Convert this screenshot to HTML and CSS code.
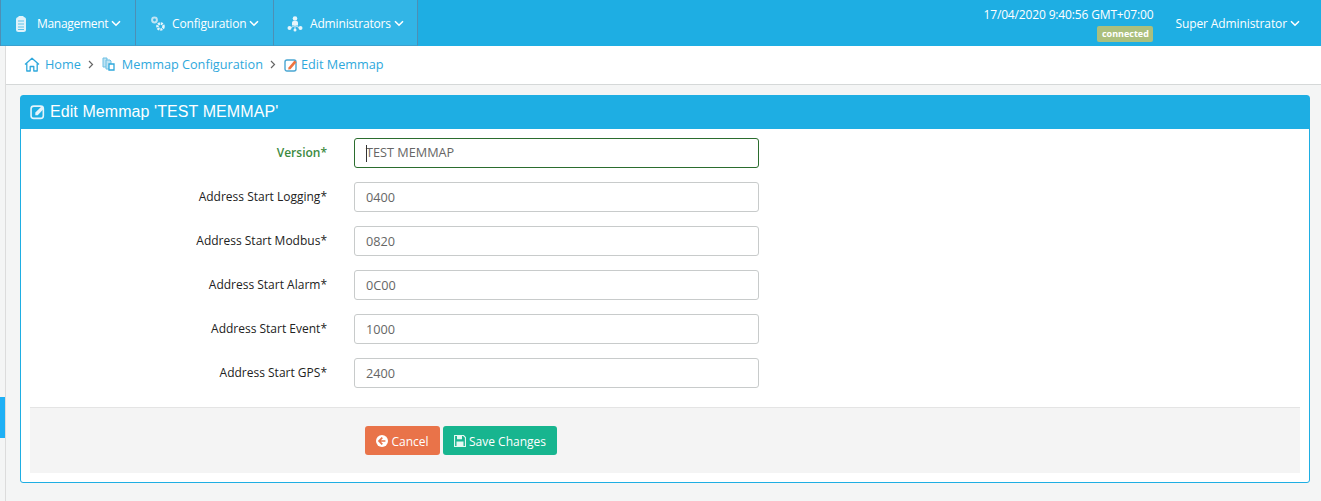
FILE: index.html
```html
<!DOCTYPE html>
<html lang="en">
<head>
<meta charset="utf-8">
<title>Edit Memmap</title>
<link rel="stylesheet" href="styles.css">
</head>
<body>
<header class="topbar">
  <nav class="menu">
    <a class="menu-item item-1"><svg class="mi" width="12" height="18" viewBox="0 0 12 18"><rect x="1" y="2" width="10" height="15" rx="2.500" fill="#dff2fa"/><rect x="3.500" y="1" width="5" height="2" fill="#dff2fa"/><path d="M3 6h6M3 9h6M3 12h6M3 14.500h6" stroke="#5cc3ea" stroke-width="1"/></svg><span>Management</span><svg class="chev" width="10" height="7" viewBox="0 0 10 7"><path d="M1 1.200 5 5.200 9 1.200" fill="none" stroke="#fff" stroke-width="1.600"/></svg></a>
    <a class="menu-item item-2"><svg class="mi" width="16" height="18" viewBox="0 0 16 18"><circle cx="4.500" cy="5" r="2.400" fill="none" stroke="#bfe3f3" stroke-width="2"/><circle cx="10.500" cy="11.500" r="3" fill="none" stroke="#e6f5fb" stroke-width="2.600" stroke-dasharray="2 .8"/></svg><span>Configuration</span><svg class="chev" width="10" height="7" viewBox="0 0 10 7"><path d="M1 1.200 5 5.200 9 1.200" fill="none" stroke="#fff" stroke-width="1.600"/></svg></a>
    <a class="menu-item item-3"><svg class="mi" width="16" height="18" viewBox="0 0 16 18"><circle cx="8" cy="3.500" r="2.300" fill="#e6f5fb"/><path d="M5 10.500V7.500Q5 6 6.500 6h3Q11 6 11 7.500v3Z" fill="#e6f5fb"/><path d="M8 10v4M3 13l5-2.500 5 2.500" fill="none" stroke="#cfe9f5"/><circle cx="2.500" cy="13" r="2" fill="#e6f5fb"/><circle cx="13.500" cy="13" r="2" fill="#e6f5fb"/><circle cx="8" cy="15" r="1.500" fill="#e6f5fb"/></svg><span>Administrators</span><svg class="chev" width="10" height="7" viewBox="0 0 10 7"><path d="M1 1.200 5 5.200 9 1.200" fill="none" stroke="#fff" stroke-width="1.600"/></svg></a>
  </nav>
  <div class="status">
    <div class="clock">17/04/2020 9:40:56 GMT+07:00</div>
    <span class="badge">connected</span>
  </div>
  <a class="user"><span>Super Administrator</span><svg class="chev" width="10" height="7" viewBox="0 0 10 7"><path d="M1 1.200 5 5.200 9 1.200" fill="none" stroke="#fff" stroke-width="1.600"/></svg></a>
</header>
<div class="side-tab"></div>
<main class="content">
  <div class="crumbs">
    <svg class="ci" width="16" height="15" viewBox="0 0 16 15"><path d="M1 7.500 8 1.200l7 6.300M2.800 6.500V14h3.400V9.500h3.600V14h3.400V6.500" fill="none" stroke="#2ea8dc" stroke-width="1.300" stroke-linejoin="round"/></svg>
    <a>Home</a>
    <svg class="sep" width="6" height="9" viewBox="0 0 6 9"><path d="M1 1l3.500 3.500L1 8" fill="none" stroke="#666" stroke-width="1.200"/></svg>
    <svg class="ci ci-copy" width="13" height="14" viewBox="0 0 13 14"><path d="M1 1h4v9H1z" fill="#bfe3f3" stroke="#6cc0e4"/><path d="M4 3h4l1 1v8H4z" fill="#bfe3f3" stroke="#6cc0e4"/><path d="M7 7h5v6H7z" fill="#fff" stroke="#2ea8dc" stroke-width="1.300"/></svg>
    <a>Memmap Configuration</a>
    <svg class="sep" width="6" height="9" viewBox="0 0 6 9"><path d="M1 1l3.500 3.500L1 8" fill="none" stroke="#666" stroke-width="1.200"/></svg>
    <svg class="ci ci-edit" width="14" height="14" viewBox="0 0 14 14"><rect x="1" y="2" width="11" height="11" rx="2" fill="none" stroke="#4aa6d2" stroke-width="1.400"/><path d="M4.500 9.500 10.500 2.500l2 1.700-6 7-2.300.4Z" fill="#ee7440"/></svg>
    <a>Edit Memmap</a>
  </div>
  <section class="panel">
    <h2 class="panel-head"><svg class="hi" width="16" height="16" viewBox="0 0 15 15"><rect x="1" y="2" width="11.500" height="11.500" rx="2.500" fill="none" stroke="#e4f4fb" stroke-width="1.500"/><path d="M5 10.500V8l6-6 2.200 2.200-6 6.300Z" fill="#e4f4fb"/></svg>Edit Memmap 'TEST MEMMAP'</h2>
    <form class="form">
      <div class="rows">
        <div class="row active"><label>Version*</label><div class="field"><i class="caret"></i>TEST MEMMAP</div></div>
        <div class="row"><label>Address Start Logging*</label><div class="field">0400</div></div>
        <div class="row"><label>Address Start Modbus*</label><div class="field">0820</div></div>
        <div class="row"><label>Address Start Alarm*</label><div class="field">0C00</div></div>
        <div class="row"><label>Address Start Event*</label><div class="field">1000</div></div>
        <div class="row"><label>Address Start GPS*</label><div class="field">2400</div></div>
      </div>
      <div class="actions">
        <button type="button" class="btn cancel"><svg width="12" height="12" viewBox="0 0 12 12"><circle cx="6" cy="6" r="6" fill="#fff"/><path d="M6.300 2.600 3 6l3.300 3.400M3.400 6H9.400" fill="none" stroke="#e97349" stroke-width="1.700"/></svg>Cancel</button>
        <button type="button" class="btn save"><svg width="12" height="12" viewBox="0 0 12 12"><path d="M1 .5h8.500L11.500 2.500V11.500H.5V.5Z" fill="none" stroke="#e4f7f1" stroke-width="1.200"/><path d="M3 1h5v3.200H3zM2.500 6.500h7v4.500h-7z" fill="#e4f7f1"/></svg>Save Changes</button>
      </div>
    </form>
  </section>
</main>
</body>
</html>
```
FILE: styles.css
```css
* { box-sizing: border-box; }
html, body { margin: 0; padding: 0; height: 501px; overflow: hidden; }
body { font-family: "Open Sans", sans-serif; background: #f4f5f5; color: #222; position: relative; }
.topbar { height: 46px; background: #1eaee3; display: flex; align-items: stretch; color: #fff; }
.menu { display: flex; background: #32b5e6; border-left: 1px solid #4d8fb5; }
.menu-item { display: flex; align-items: center; font-size: 12px; letter-spacing: -.16px; border-right: 1px solid #4d8fb5; border-bottom: 1px solid #3aa1cf; padding-top: 2px; }
.item-1 { width: 135px; padding-left: 14px; letter-spacing: -.3px; }
.item-2 { width: 138px; padding-left: 14px; }
.item-3 { width: 144px; padding-left: 13px; }
.mi { margin-right: 7px; flex: none; }
.item-1 .mi { margin-right: 10px; }
.item-2 .mi { margin-right: 6px; }
.chev { margin-left: 3px; flex: none; }
.status { margin-left: auto; display: flex; flex-direction: column; align-items: flex-end; padding-top: 7px; }
.clock { font-size: 12px; line-height: 16px; letter-spacing: -.15px; }
.badge { margin-top: 3px; width: 56px; height: 16px; background: #abbf7d; border-radius: 2px; font-size: 9px; font-weight: 700; line-height: 16px; text-align: center; }
.user { display: flex; align-items: center; font-size: 12px; letter-spacing: -.1px; margin-left: 22px; padding-right: 21px; }
.side-tab { position: absolute; left: 0; top: 397px; width: 5px; height: 41px; background: #1fb0f5; }
.content { margin-left: 5px; border-left: 1px solid #dcdcdc; height: 455px; }
.crumbs { height: 39px; background: #fff; border-bottom: 1px solid #d5d8d8; display: flex; align-items: center; padding: 0 0 2px 18px; font-size: 12.7px; color: #2ea8dc; }
.crumbs a { line-height: 17px; }
.ci { margin-right: 5px; flex: none; }
.ci-copy { margin-right: 7px; }
.ci-edit { margin-right: 3px; margin-top: 2px; }
.sep { margin: 0 8px 0 7px; flex: none; }
.panel { margin: 10px 0 0 14px; width: 1290px; height: 388px; background: #fff; border: 1px solid #1eaee3; border-radius: 3px; }
.panel-head { margin: 0; height: 33px; background: #1eaee3; color: #fff; font: 400 16px/32px "Liberation Sans", sans-serif; letter-spacing: .08px; display: flex; align-items: center; padding: 0 0 2px 9px; }
.hi { margin-right: 4px; }
.form { padding: 0 9px; }
.rows { padding-top: 9px; height: 278px; }
.row { display: flex; height: 30px; margin-bottom: 14px; align-items: flex-start; }
.row label { width: 297px; text-align: right; font-size: 12px; line-height: 16px; padding-top: 7px; color: #222; }
.row.active label { color: #3c8a3f; font-weight: 600; }
.field { margin-left: 27px; width: 405px; height: 30px; border: 1px solid #c8cbcb; border-radius: 3px; font-size: 12.7px; line-height: 28px; padding-left: 11px; color: #666; position: relative; }
.row.active .field { border-color: #2b6d2e; line-height: 26px; }
.caret { position: absolute; left: 11px; top: 6px; width: 1px; height: 17px; background: #333; }
.actions { height: 66px; background: #f4f4f4; border-top: 1px solid #e4e4e4; display: flex; gap: 3px; padding: 18px 0 0 335px; align-items: flex-start; }
.btn { height: 29px; border: 0; border-radius: 3px; color: #fff; font: 12px "Open Sans", sans-serif; display: flex; align-items: center; gap: 3px; padding: 1px 0 0; justify-content: center; }
.cancel { width: 75px; background: #e97349; }
.save { width: 114px; background: #17b58f; }
```
